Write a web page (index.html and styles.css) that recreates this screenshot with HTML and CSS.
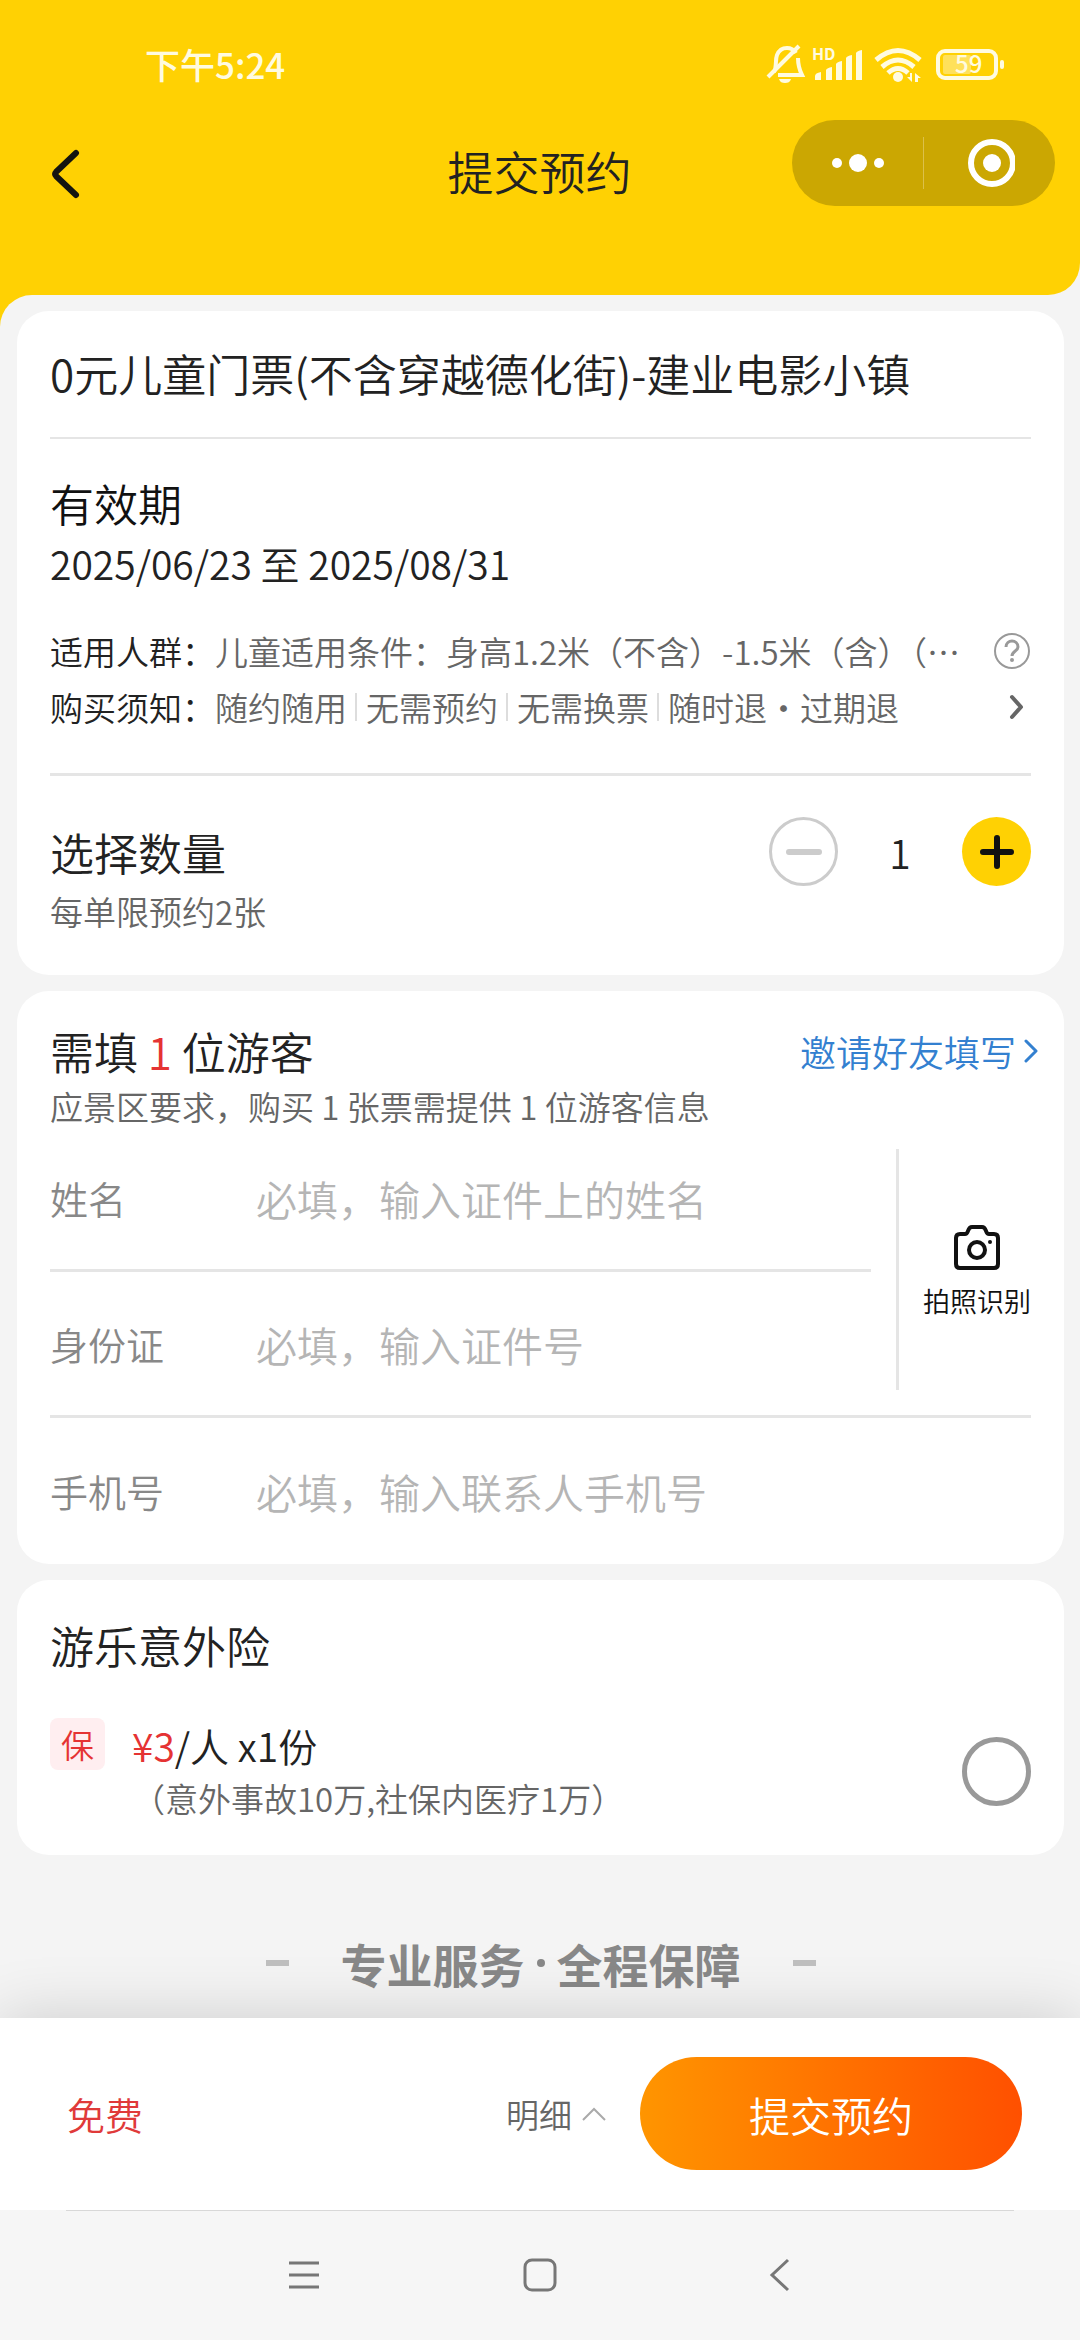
FILE: index.html
```html
<!DOCTYPE html>
<html lang="zh-CN">
<head>
<meta charset="utf-8">
<meta name="viewport" content="width=device-width, initial-scale=1">
<title>提交预约</title>
<link rel="stylesheet" href="styles.css">
</head>
<body>
<header class="top">
  <div class="status">
    <span class="status-time">下午5:24</span>
    <svg class="status-icons" width="240" height="44" viewBox="0 0 240 44" aria-hidden="true">
      <g fill="none" stroke="currentColor" stroke-width="4">
        <path d="M8 30C11 25 9 18 11 13C13 8 17 6 21 6C25 6 28 8 30 11M32 16C32 23 33 27 36 33H12"/>
        <path d="M2 35L33 4"/>
      </g>
      <path d="M13 37H25C24 40 22 41 19 41S14 40 13 37Z" fill="currentColor"/>
      <text x="46" y="18" class="status-hd">HD</text>
      <g fill="currentColor">
        <path d="M49 38V34Q49 31 55 30V38Z"/>
        <path d="M60 38V28Q61 26 66 25V38Z"/>
        <path d="M70 38V22Q71 20 76 19V38Z"/>
        <path d="M80 38V16Q81 14 86 13V38Z"/>
        <path d="M90 38V11Q91 9 96 8V38Z"/>
      </g>
      <g fill="none" stroke="currentColor" stroke-width="5">
        <path d="M110 18Q132 -1 154 18"/>
        <path d="M116 25Q132 11 148 25"/>
        <path d="M122 31Q132 22 142 31"/>
      </g>
      <circle cx="132" cy="35" r="5" fill="currentColor"/>
      <path d="M146 31V40L141 35H144V31ZM149 40V31L155 36H152V40Z" fill="currentColor"/>
      <rect x="172" y="9" width="58" height="27" rx="7" fill="none" stroke="currentColor" stroke-width="4"/>
      <rect x="177" y="13" width="28" height="19" rx="2" fill="currentColor" opacity=".4"/>
      <rect x="234" y="18" width="4" height="9" rx="2" fill="currentColor"/>
      <text x="189" y="31" class="status-battery">59</text>
    </svg>
  </div>
  <nav class="navbar">
    <button class="icon-btn back" type="button" aria-label="返回">
      <svg width="30" height="52" viewBox="0 0 30 52"><path d="M26 5L6 24Q4 26 6 28L26 47" fill="none" stroke="#141410" stroke-width="6" stroke-linecap="round"/></svg>
    </button>
    <h1 class="navbar-title">提交预约</h1>
    <div class="capsule">
      <button class="icon-btn capsule-btn" type="button" aria-label="更多">
        <svg width="52" height="20" viewBox="0 0 52 20" fill="#fff"><circle cx="5" cy="10" r="5"/><circle cx="26" cy="10" r="9"/><circle cx="47" cy="10" r="5"/></svg>
      </button>
      <button class="icon-btn capsule-btn" type="button" aria-label="关闭">
        <svg width="50" height="50" viewBox="0 0 50 50"><circle cx="27" cy="25" r="21" fill="none" stroke="#fff" stroke-width="6"/><circle cx="27" cy="25" r="9" fill="#fff"/></svg>
      </button>
    </div>
  </nav>
</header>

<div class="sheet">
<main class="content">
  <section class="card">
    <h2 class="heading product">0元儿童门票(不含穿越德化街)-建业电影小镇</h2>
    <div class="validity">
      <h3 class="heading">有效期</h3>
      <p class="date">2025/06/23 至 2025/08/31</p>
    </div>
    <div class="facts">
      <div class="fact">
        <span class="fact-name">适用人群：</span>
        <span class="fact-text">儿童适用条件：身高1.2米（不含）-1.5米（含）（…</span>
        <button class="icon-btn" type="button" aria-label="说明">
          <svg width="38" height="38" viewBox="0 0 38 38" fill="none" stroke="#999" stroke-width="2"><circle cx="19" cy="19" r="17"/><path d="M13 15C13 11 16 9 19 9S25 11 25 15C25 19 19 19 19 24" stroke-width="3"/><circle cx="19" cy="28" r="1"/></svg>
        </button>
      </div>
      <div class="fact">
        <span class="fact-name">购买须知：</span>
        <ul class="fact-text tags">
          <li>随约随用</li><li>无需预约</li><li>无需换票</li><li>随时退・过期退</li>
        </ul>
        <button class="icon-btn" type="button" aria-label="查看须知">
          <svg width="30" height="30" viewBox="0 0 30 30"><path d="M11 5L20 15L11 25" fill="none" stroke="#666" stroke-width="4" stroke-linecap="round" stroke-linejoin="round"/></svg>
        </button>
      </div>
    </div>
    <div class="quantity">
      <div class="quantity-row">
        <h3 class="heading">选择数量</h3>
        <div class="stepper">
          <button class="step minus" type="button" aria-label="减少" disabled>
            <svg width="36" height="36" viewBox="0 0 36 36"><path d="M3 18H33" stroke="currentColor" stroke-width="6" stroke-linecap="round"/></svg>
          </button>
          <output class="count">1</output>
          <button class="step plus" type="button" aria-label="增加">
            <svg width="36" height="36" viewBox="0 0 36 36"><path d="M4 18H32M18 4V32" stroke="currentColor" stroke-width="6" stroke-linecap="round"/></svg>
          </button>
        </div>
      </div>
      <p class="note">每单限预约2张</p>
    </div>
  </section>

  <section class="card visitors">
    <div class="visitors-head">
      <h2 class="heading">需填 <span class="red">1</span> 位游客</h2>
      <a class="invite" href="#invite">邀请好友填写
        <svg width="14" height="26" viewBox="0 0 14 26"><path d="M2 3L12 13L2 23" fill="none" stroke="currentColor" stroke-width="3" stroke-linecap="round" stroke-linejoin="round"/></svg>
      </a>
    </div>
    <p class="note">应景区要求，购买 1 张票需提供 1 位游客信息</p>
    <div class="identity">
      <div class="identity-fields">
        <div class="field field-name">
          <label for="name">姓名</label>
          <input id="name" type="text" placeholder="必填，输入证件上的姓名">
        </div>
        <div class="field field-id">
          <label for="idcard">身份证</label>
          <input id="idcard" type="text" placeholder="必填，输入证件号">
        </div>
      </div>
      <button class="scan" type="button">
        <svg width="48" height="48" viewBox="0 0 48 48" fill="none" stroke="#111" stroke-width="4">
          <path d="M7 11H12C16 11 14 4 19 4H29C34 4 32 11 36 11H41Q45 11 45 15V41Q45 45 41 45H7Q3 45 3 41V15Q3 11 7 11Z"/>
          <circle cx="24" cy="27" r="8"/><circle cx="37" cy="19" r="2" fill="#111" stroke="none"/>
        </svg>
        <span>拍照识别</span>
      </button>
    </div>
    <div class="field field-phone">
      <label for="phone">手机号</label>
      <input id="phone" type="tel" placeholder="必填，输入联系人手机号">
    </div>
  </section>

  <section class="card insurance">
    <h2 class="heading">游乐意外险</h2>
    <label class="option">
      <span class="badge">保</span>
      <span class="option-text">
        <span class="price"><span class="red">¥3</span>/人 x1份</span>
        <span class="cover">（意外事故10万,社保内医疗1万）</span>
      </span>
      <input class="tick" type="checkbox">
    </label>
  </section>

  <p class="slogan"><span>专业服务</span><i class="slogan-dot"></i><span>全程保障</span></p>
</main>
</div>

<footer class="checkout">
  <strong class="total">免费</strong>
  <button class="detail" type="button">明细
    <svg width="26" height="16" viewBox="0 0 26 16"><path d="M2 14L13 3L24 14" fill="none" stroke="#aaa" stroke-width="2"/></svg>
  </button>
  <button class="submit" type="button">提交预约</button>
</footer>
<nav class="system">
  <button class="icon-btn" type="button" aria-label="最近任务">
    <svg width="36" height="36" viewBox="0 0 36 36"><path d="M3 6H33M3 18H33M3 30H33" stroke="#777" stroke-width="3"/></svg>
  </button>
  <button class="icon-btn" type="button" aria-label="主页">
    <svg width="36" height="36" viewBox="0 0 36 36"><rect x="3" y="3" width="30" height="30" rx="7" fill="none" stroke="#777" stroke-width="3"/></svg>
  </button>
  <button class="icon-btn" type="button" aria-label="返回">
    <svg width="36" height="36" viewBox="0 0 36 36"><path d="M30 3L14 18L30 33" fill="none" stroke="#777" stroke-width="3"/></svg>
  </button>
</nav>
</body>
</html>
```
FILE: styles.css
```css
* { box-sizing: border-box; }

body {
  margin: 0;
  min-height: 100vh;
  display: flex;
  flex-direction: column;
  background: #f4f4f4;
  color: #222;
  font-family: "Noto Sans CJK SC", "Noto Sans", sans-serif;
  font-size: 33px;
  font-weight: 350;
  line-height: 56px;
}

h1, h2, h3, p, ul { margin: 0; padding: 0; font-weight: inherit; }
button, input { font: inherit; color: inherit; }
button { padding: 0; border: 0; background: none; }
svg { display: block; flex: none; }

.icon-btn { display: flex; align-items: center; justify-content: center; flex: none; }
.red { color: #e53333; }

/* Header */
.top {
  background: #ffd103;
  border-bottom-right-radius: 32px;
  padding-bottom: 89px;
}
.status {
  display: flex;
  align-items: center;
  justify-content: space-between;
  height: 120px;
  padding: 8px 74px 0 145px;
  color: #fffbe0;
}
.status-time { font-size: 35px; font-weight: 500; }
.status-icons { fill: currentColor; }
.status-hd { font-size: 16px; font-weight: 700; }
.status-battery { font-size: 24px; font-weight: 500; }
.navbar {
  display: grid;
  grid-template-columns: 1fr auto 1fr;
  align-items: center;
  padding: 0 25px 0 50px;
}
.back { justify-self: start; margin-top: 21px; }
.navbar-title { font-size: 46px; line-height: 60px; margin: 14px 26px 0 0; }
.capsule {
  justify-self: end;
  display: flex;
  align-items: center;
  width: 263px;
  height: 86px;
  border-radius: 43px;
  background: #cba702;
}
.capsule-btn { flex: 1; height: 52px; }
.capsule-btn + .capsule-btn { border-left: 1px solid #dcc04a; }

/* Cards */
.sheet {
  flex: 1;
  background: linear-gradient(#ffd103, #ffd103) left top / 32px 32px no-repeat;
}
.content {
  display: flex;
  flex-direction: column;
  gap: 16px;
  padding: 16px 16px 24px 17px;
  background: #f4f4f4;
  border-top-left-radius: 32px;
}
.card {
  background: #fff;
  border-radius: 32px;
  padding: 0 33px;
}
.heading { font-size: 44px; line-height: 60px; }
.product { padding: 32px 0 34px; border-bottom: 2px solid #e5e5e5; }
.validity { padding-top: 34px; color: #111; }
.date { font-size: 39px; line-height: 60px; color: #222; }
.facts { padding: 30px 0 38px; border-bottom: 3px solid #e5e5e5; }
.fact { display: flex; align-items: center; }
.fact-text { flex: 1; min-width: 0; color: #666; white-space: nowrap; overflow: hidden; }
.tags { display: flex; align-items: center; list-style: none; }
.tags li + li { position: relative; margin-left: 19px; }
.tags li + li::before {
  content: "";
  position: absolute;
  left: -11px;
  top: 14px;
  width: 2px;
  height: 28px;
  background: #ddd;
}

.quantity { padding: 41px 0 39px; }
.quantity-row { display: flex; justify-content: space-between; align-items: center; }
.note { line-height: 50px; color: #666; }
.stepper { display: flex; align-items: center; }
.step {
  display: flex;
  align-items: center;
  justify-content: center;
  width: 69px;
  height: 69px;
  border-radius: 50%;
}
.minus { border: 3px solid #ccc; color: #ccc; }
.plus { background: #ffd103; color: #111; }
.count { width: 124px; text-align: center; font-size: 39px; }

/* Visitor form */
.visitors { padding-top: 30px; }
.visitors-head { display: flex; justify-content: space-between; align-items: center; }
.invite {
  display: flex;
  align-items: center;
  gap: 8px;
  margin-right: -7px;
  font-size: 36px;
  color: #3380d0;
  text-decoration: none;
}
.identity { display: flex; gap: 25px; border-bottom: 3px solid #e5e5e5; }
.identity-fields { flex: 1; min-width: 0; }
.field { display: flex; align-items: center; font-size: 38px; color: #888; }
.field label { width: 206px; flex: none; }
.field input {
  flex: 1;
  min-width: 0;
  height: 60px;
  padding: 0;
  border: 0;
  outline: 0;
  background: none;
  font-size: 41px;
  color: #222;
}
.field input::placeholder { color: #b5b5b5; opacity: 1; }
.field-name { height: 141px; padding-bottom: 4px; border-bottom: 3px solid #e5e5e5; }
.field-id { height: 143px; }
.field-phone { height: 146px; }
.scan {
  display: flex;
  flex-direction: column;
  align-items: center;
  justify-content: center;
  gap: 10px;
  margin: 18px 0 25px;
  padding: 4px 0 0 24px;
  border-left: 3px solid #e5e5e5;
  font-size: 27px;
  line-height: 40px;
  color: #111;
}

/* Insurance */
.insurance { padding: 35px 33px 31px; }
.option { display: flex; align-items: center; margin-top: 43px; }
.badge {
  align-self: flex-start;
  width: 55px;
  height: 52px;
  margin-right: 27px;
  border-radius: 8px;
  background: #ffeef0;
  color: #e53333;
  line-height: 52px;
  text-align: center;
}
.option-text { flex: 1; display: flex; flex-direction: column; }
.price { font-size: 39px; line-height: 54px; }
.cover { line-height: 52px; color: #666; }
.tick {
  appearance: none;
  width: 69px;
  height: 69px;
  margin: 0;
  border: 5px solid #999;
  border-radius: 50%;
}

.slogan {
  display: flex;
  align-items: center;
  justify-content: center;
  margin-top: 62px;
  font-size: 46px;
  line-height: 60px;
  font-weight: 700;
  color: #888;
}
.slogan::before, .slogan::after { content: ""; width: 23px; height: 6px; background: #bfbfbf; }
.slogan::before { margin-right: 52px; }
.slogan::after { margin-left: 52px; }
.slogan-dot { width: 8px; height: 8px; margin: 0 12px; border-radius: 50%; background: #888; }

/* Checkout bar */
.checkout {
  position: relative;
  display: flex;
  align-items: center;
  padding: 39px 58px 40px 67px;
  background: #fff;
  box-shadow: 0 0 60px rgba(0, 0, 0, .16);
}
.total { flex: 1; font-size: 38px; font-weight: inherit; color: #e03a3a; }
.detail { display: flex; align-items: center; gap: 9px; margin-right: 33px; color: #666; }
.submit {
  width: 382px;
  height: 113px;
  border-radius: 57px;
  background: linear-gradient(90deg, #ff9500, #ff5000);
  font-size: 41px;
  color: #fff;
}

.system {
  position: relative;
  display: flex;
  align-items: center;
  justify-content: center;
  gap: 200px;
  height: 130px;
  background: #f6f6f6;
}
.system::before {
  content: "";
  position: absolute;
  top: 0;
  left: 66px;
  right: 66px;
  height: 1px;
  background: #d8d8d8;
}
```
